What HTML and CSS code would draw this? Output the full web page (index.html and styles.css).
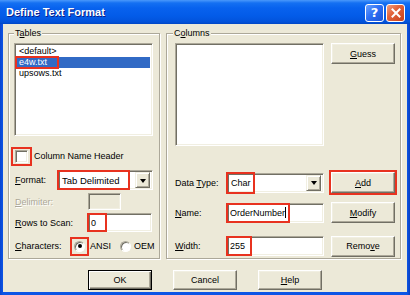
FILE: index.html
```html
<!DOCTYPE html>
<html>
<head>
<meta charset="utf-8">
<link rel="stylesheet" href="styles.css">
</head>
<body>
<div class="window">
  <div class="titlebar">
    <span class="title">Define Text Format</span>
    <div class="caption-btns">
      <span class="cap cap-help">?</span>
      <span class="cap cap-close"><svg width="10" height="10" viewBox="0 0 10 10"><path d="M1.5 1.5 L8.5 8.5 M8.5 1.5 L1.5 8.5" stroke="#fff" stroke-width="2" stroke-linecap="square"/></svg></span>
    </div>
  </div>
  <div class="frame">
    <div class="client">
      <div class="groups">
        <section class="group group-tables">
          <span class="group-title">T<u>a</u>bles</span>
          <div class="sunken listbox tables-list">
            <div class="item">&lt;default&gt;</div>
            <div class="item selected"><span class="mark item-mark">e4w.txt</span></div>
            <div class="item">upsows.txt</div>
          </div>
          <div class="check-row">
            <span class="mark check-mark"><span class="checkbox"></span></span>
            <span class="check-label">Column Name Header</span>
          </div>
          <div class="row format-row">
            <span class="lbl lbl-format"><u>F</u>ormat:</span>
            <div class="sunken combo combo-format">
              <span class="mark text-mark format-mark">Tab Delimited</span>
              <span class="dd-btn"><span class="arrow"></span></span>
            </div>
          </div>
          <div class="row delim-row">
            <span class="lbl lbl-wide disabled"><u>D</u>elimiter:</span>
            <div class="sunken field delim-field"></div>
          </div>
          <div class="row rows-row">
            <span class="lbl lbl-wide"><u>R</u>ows to Scan:</span>
            <div class="sunken field rows-field"><span class="mark text-mark zero-mark">0</span></div>
          </div>
          <div class="row chars-row">
            <span class="lbl lbl-chars"><u>C</u>haracters:</span>
            <span class="mark radio-mark"><span class="radio checked"></span></span>
            <span class="radio-label">ANSI</span>
            <span class="radio oem-radio"></span>
            <span class="radio-label">OEM</span>
          </div>
        </section>
        <section class="group group-columns">
          <span class="group-title">C<u>o</u>lumns</span>
          <div class="columns-top">
            <div class="sunken listbox columns-list"></div>
            <span class="btn side-btn"><u>G</u>uess</span>
          </div>
          <div class="row rrow dtype-row">
            <span class="lbl lbl-right">Data <u>T</u>ype:</span>
            <div class="sunken combo combo-dtype">
              <span class="mark text-mark char-mark">Char</span>
              <span class="dd-btn"><span class="arrow"></span></span>
            </div>
            <span class="btn side-btn add-btn"><u>A</u>dd</span>
          </div>
          <div class="row rrow name-row">
            <span class="lbl lbl-right"><u>N</u>ame:</span>
            <div class="sunken field rfield"><span class="mark text-mark name-mark">OrderNumber<span class="caret"></span></span></div>
            <span class="btn side-btn"><u>M</u>odify</span>
          </div>
          <div class="row rrow width-row">
            <span class="lbl lbl-right"><u>W</u>idth:</span>
            <div class="sunken field rfield"><span class="mark text-mark width-mark">255</span></div>
            <span class="btn side-btn">Remo<u>v</u>e</span>
          </div>
        </section>
      </div>
      <div class="buttons">
        <span class="btn dlg-btn default-btn">OK</span>
        <span class="btn dlg-btn">Cancel</span>
        <span class="btn dlg-btn"><u>H</u>elp</span>
      </div>
    </div>
  </div>
</div>
</body>
</html>
```

FILE: styles.css
```css
* { box-sizing: border-box; }

body {
  margin: 0;
  font-family: "Liberation Sans", Arial, sans-serif;
  font-size: 9px;
  color: #000;
  background: #fff;
}

u { text-decoration: underline; text-underline-offset: 1px; }

.window {
  width: 410px;
  height: 295px;
  display: flex;
  flex-direction: column;
}

.titlebar {
  height: 24px;
  display: flex;
  align-items: center;
  justify-content: space-between;
  padding: 0 5px 0 6px;
  background: linear-gradient(#4a98fb 0, #1470f2 3px, #0862ee 8px, #035be8 16px, #0252da 22px, #0046c4 24px);
}

.title {
  color: #fff;
  font-weight: bold;
  font-size: 11px;
  text-shadow: 1px 1px 0 #0a1f8a;
}

.caption-btns {
  display: flex;
  gap: 2px;
  margin-top: 1px;
}

.cap {
  width: 19px;
  height: 18px;
  border: 1px solid #fff;
  border-radius: 3px;
  display: flex;
  align-items: center;
  justify-content: center;
  color: #fff;
}

.cap-help {
  background: linear-gradient(135deg, #6aa2ff 0, #2e70f4 45%, #1c54d8 100%);
  font-weight: bold;
  font-size: 13px;
  font-family: "DejaVu Sans", sans-serif;
}

.cap-close {
  background: linear-gradient(135deg, #f0a080 0, #e2643c 40%, #c8401a 100%);
}

.frame {
  flex: 1;
  display: flex;
  padding: 0 3px 3px;
  background: linear-gradient(90deg, #0a45d0 0, #0c55e6 3px, #0c55e6 calc(100% - 3px), #0a3fc0 100%);
}

.client {
  flex: 1;
  background: #ece9d8;
  padding: 9px 6px 0 5px;
  display: flex;
  flex-direction: column;
}

.groups {
  display: flex;
  gap: 6px;
  height: 226px;
}

.group {
  position: relative;
  border: 1px solid #aca899;
  box-shadow: inset 1px 1px 0 #fff, 1px 1px 0 #fff;
  display: flex;
  flex-direction: column;
}

.group-tables { width: 152px; padding: 9px 0 0 5px; }
.group-columns { width: 235px; padding: 9px 0 0 8px; }

.group-title {
  position: absolute;
  top: -6px;
  left: 5px;
  padding: 0 1px;
  background: #ece9d8;
  line-height: 11px;
}

.group-columns .group-title { left: 6px; }

.sunken {
  border: 1px solid;
  border-color: #aca899 #fff #fff #aca899;
  box-shadow: inset 1px 1px 0 #716f64, inset -1px -1px 0 #f1efe2;
  background: #fff;
}

.listbox { padding: 2px 1px; }
.tables-list { width: 139px; height: 93px; }
.columns-list { width: 149px; height: 103px; }

.item {
  height: 11px;
  line-height: 11px;
  padding-left: 3px;
  white-space: nowrap;
}

.item.selected {
  background: #316ac5;
  color: #fff;
  margin-right: 1px;
}

.mark {
  outline: 2px solid #e8321f;
}

.item-mark {
  display: inline-block;
  margin-left: -2px;
  padding: 0 10px 0 2px;
  height: 9px;
  line-height: 9px;
  vertical-align: top;
  margin-top: 1px;
}

.check-row {
  display: flex;
  align-items: center;
  margin-top: 12px;
  height: 16px;
}

.check-mark {
  display: inline-flex;
  padding: 1px 2px 1px 2px;
  margin-left: -1px;
}

.checkbox {
  width: 13px;
  height: 13px;
  border: 1px solid;
  border-color: #aca899 #fff #fff #aca899;
  box-shadow: inset 1px 1px 0 #716f64, inset -1px -1px 0 #f1efe2;
  background: #fff;
}

.check-label { margin-left: 4px; }

.row {
  display: flex;
  align-items: center;
}

.lbl { white-space: nowrap; }
.lbl-format { width: 44px; padding-left: 1px; }
.lbl-wide { width: 74px; padding-left: 1px; }
.lbl-chars { width: 60px; padding-left: 1px; }
.lbl-right { width: 52px; }

.disabled { color: #aca899; text-shadow: 1px 1px 0 #fff; }

.format-row { margin-top: 6px; height: 20px; }
.delim-row { margin-top: 3px; height: 17px; }
.rows-row { margin-top: 3px; height: 19px; }
.chars-row { margin-top: 5px; height: 18px; }

.combo {
  height: 20px;
  display: flex;
  align-items: center;
  justify-content: space-between;
  padding: 2px 2px 2px 1px;
}

.combo-format { width: 95px; }
.combo-dtype { width: 97px; }

.text-mark {
  display: inline-flex;
  align-items: center;
  height: 100%;
  white-space: nowrap;
}

.format-mark { padding: 0 8px 0 3px; margin-left: -1px; height: 16px; font-size: 9.5px; }
.char-mark { padding: 0 2px 0 3px; margin-left: -1px; height: 18px; }

.dd-btn {
  width: 15px;
  height: 16px;
  display: flex;
  align-items: center;
  justify-content: center;
  background: #ece9d8;
  border: 1px solid;
  border-color: #f1efe2 #716f64 #716f64 #f1efe2;
  box-shadow: inset 1px 1px 0 #fff, inset -1px -1px 0 #aca899;
}

.arrow {
  width: 0;
  height: 0;
  border-left: 3.5px solid transparent;
  border-right: 3.5px solid transparent;
  border-top: 4px solid #000;
  margin-top: 1px;
}

.field {
  padding: 2px;
  display: flex;
  align-items: center;
}

.delim-field { width: 33px; height: 17px; background: #ece9d8; }
.rows-field { width: 64px; height: 19px; }

.zero-mark { padding: 0 9px 0 2px; margin-left: -2px; height: 15px; }

.radio-mark {
  display: inline-flex;
  padding: 2px 2px;
  margin-left: -2px;
}

.radio {
  width: 11px;
  height: 11px;
  border-radius: 50%;
  border: 1px solid;
  border-color: #aca899 #fff #fff #aca899;
  box-shadow: inset 1px 1px 0 #716f64;
  background: #fff;
  display: inline-flex;
  align-items: center;
  justify-content: center;
}

.radio.checked::after {
  content: "";
  width: 4px;
  height: 4px;
  border-radius: 50%;
  background: #000;
}

.radio-label { margin-left: 3px; }
.oem-radio { margin-left: 9px; }

.columns-top {
  display: flex;
  align-items: flex-start;
  gap: 7px;
}

.btn {
  display: flex;
  align-items: center;
  justify-content: center;
  background: #ece9d8;
  border: 1px solid;
  border-color: #fff #716f64 #716f64 #fff;
  box-shadow: inset -1px -1px 0 #aca899, inset 1px 1px 0 #f1efe2;
  white-space: nowrap;
}

.side-btn { width: 64px; height: 21px; }

.rrow .side-btn { margin-left: 7px; }

.add-btn { outline: 2px solid #e8321f; outline-offset: 0; }

.dtype-row { margin-top: 26px; height: 21px; }
.name-row { margin-top: 9px; height: 21px; }
.width-row { margin-top: 13px; height: 20px; }

.rfield { width: 97px; height: 20px; }

.name-mark { padding: 0 2px 0 2px; margin-left: -2px; height: 16px; }
.width-mark { padding: 0 5px 0 2px; margin-left: -2px; height: 16px; }

.caret {
  display: inline-block;
  width: 1px;
  height: 11px;
  background: #000;
}

.buttons {
  display: flex;
  gap: 21px;
  padding-left: 80px;
  margin-top: 11px;
}

.dlg-btn { width: 64px; height: 20px; }

.default-btn {
  border: 1px solid #000;
  box-shadow: inset 1px 1px 0 #fff, inset -1px -1px 0 #716f64, inset -2px -2px 0 #aca899;
}
```
